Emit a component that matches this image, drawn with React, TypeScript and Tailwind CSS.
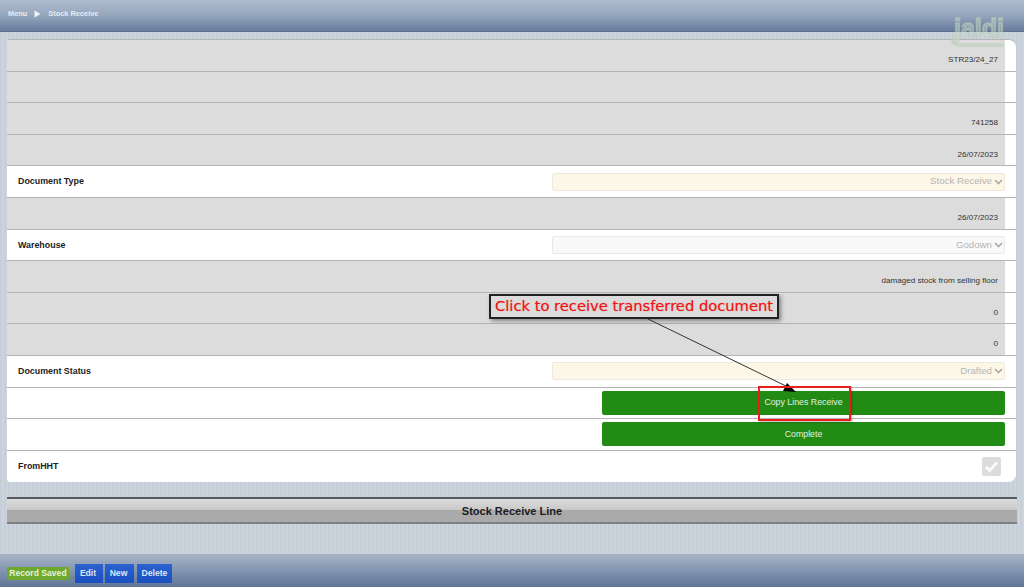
import React from "react";

const sans = "font-['Liberation_Sans',Arial,sans-serif]";

function GreyRow({ value }: { value?: string }) {
  return (
    <div className="flex h-[31.6px] border-b border-[#b4b4b4] bg-white">
      <div className="flex flex-1 items-end justify-end bg-[#dcdcdc] pr-[7px] pb-[5.5px] text-[8.1px] leading-[11px] text-[#333]">
        {value}
      </div>
      <div className="w-[11px]" />
    </div>
  );
}

function SelectRow({ label, value, bg, border }: { label: string; value: string; bg: string; border: string }) {
  return (
    <div className="flex h-[31.6px] items-center border-b border-[#b4b4b4] bg-white pl-[11px] pr-[11px]">
      <div className="flex-1 pt-[1px] text-[8.9px] font-bold text-[#222]">{label}</div>
      <div className={`flex h-[18px] w-[453px] items-center justify-end rounded-[2px] border pr-[1px] text-[9.7px] text-[#b5b5b5] ${bg} ${border}`}>
        <span>{value}</span>
        <svg width="9" height="6" viewBox="0 0 9 6" className="ml-[2px]">
          <path d="M1 1l3.5 3.5L8 1" fill="none" stroke="#a8a8a8" strokeWidth="1.6" />
        </svg>
      </div>
    </div>
  );
}

function ButtonRow({ label }: { label: string }) {
  return (
    <div className="flex h-[31.6px] items-center justify-end border-b border-[#b4b4b4] bg-white pr-[11px]">
      <div className="flex h-[24px] w-[403px] items-center justify-center rounded-[2px] bg-[#228b14] text-[8.8px] text-[#e3f0e0]">
        {label}
      </div>
    </div>
  );
}

export default function App() {
  return (
    <div className={`relative flex h-[587px] w-[1024px] flex-col overflow-hidden bg-[#c9d1db] bg-[repeating-linear-gradient(90deg,#c6ced8_0px,#c6ced8_2px,#ccd4dd_2px,#ccd4dd_4px)] ${sans}`}>
      <header className="flex h-[32px] shrink-0 items-center border-b border-[#5f6f88] bg-gradient-to-b from-[#b0bccd] via-[#95a6bd] to-[#667d9e] pl-[8px] pb-[4px] text-[7.4px] font-bold text-[#e6ebf2]">
        <span>Menu</span>
        <svg width="7" height="8" viewBox="0 0 7 8" className="ml-[7px]">
          <path d="M0.5 0.5L6.5 4L0.5 7.5Z" fill="#f2f4f7" />
        </svg>
        <span className="ml-[7px]">Stock Receive</span>
      </header>

      <main className="flex-1 px-[7px] pt-[7px]">
        <div className="w-[1009px] overflow-hidden rounded-tr-[8px] rounded-br-[8px] rounded-bl-[4px] rounded-tl-[3px] border-t border-[#b4b4b4] bg-white">
          <GreyRow value="STR23/24_27" />
          <GreyRow />
          <GreyRow value="741258" />
          <GreyRow value="26/07/2023" />
          <SelectRow label="Document Type" value="Stock Receive" bg="bg-[#fdf7e8]" border="border-[#eee9dc]" />
          <GreyRow value="26/07/2023" />
          <SelectRow label="Warehouse" value="Godown" bg="bg-[#f9f9f9]" border="border-[#e8e8e8]" />
          <GreyRow value="damaged stock from selling floor" />
          <GreyRow value="0" />
          <GreyRow value="0" />
          <SelectRow label="Document Status" value="Drafted" bg="bg-[#fdf7e8]" border="border-[#eee9dc]" />
          <ButtonRow label="Copy Lines Receive" />
          <ButtonRow label="Complete" />
          <div className="flex h-[31.6px] items-center justify-between bg-white pl-[11px] pr-[15px]">
            <span className="text-[8.9px] font-bold text-[#222]">FromHHT</span>
            <div className="flex h-[19px] w-[19px] items-center justify-center rounded-[2px] bg-[#dcdcdc]">
              <svg width="15" height="13" viewBox="0 0 15 13">
                <path d="M2 7l3.6 3.6L13 2.5" fill="none" stroke="#fafafa" strokeWidth="3" />
              </svg>
            </div>
          </div>
        </div>

        <div className="mt-[15px] flex h-[27px] w-[1010px] items-center justify-center border-t-2 border-b-2 border-t-[#555b60] border-b-[#7d8184] bg-[linear-gradient(180deg,#dcdcdc_0%,#c8c8c8_48%,#aaaaaa_50%,#aaaaaa_100%)] text-[11px] font-bold text-[#1c1c1c]">
          Stock Receive Line
        </div>
      </main>

      <footer className="flex h-[33px] shrink-0 items-center border-t border-[#a3b0c2] bg-gradient-to-b from-[#a6b3c7] to-[#5f7696] pl-[7px] pt-[4px] text-[8.6px] font-bold">
        <div className="flex h-[13px] w-[62px] items-center justify-center bg-[#6fa82e] text-[#e6f3d8]">Record Saved</div>
        <div className="ml-[6px] flex h-[19px] w-[28px] items-center justify-center bg-gradient-to-b from-[#2a62d0] to-[#1a4fc0] pr-[2px] text-[#dce6f8]">Edit</div>
        <div className="ml-[2px] flex h-[19px] w-[29px] items-center justify-center bg-gradient-to-b from-[#2a62d0] to-[#1a4fc0] pr-[2px] text-[#dce6f8]">New</div>
        <div className="ml-[3px] flex h-[19px] w-[35px] items-center justify-center bg-gradient-to-b from-[#2a62d0] to-[#1a4fc0] text-[#dce6f8]">Delete</div>
      </footer>

      {/* watermark */}
      <svg className="pointer-events-none absolute left-[948px] top-[14px]" width="60" height="36" viewBox="0 0 60 36">
        <path d="M5 25Q5 31 12 31L54 31" fill="none" stroke="#b9cdb8" strokeOpacity="0.55" strokeWidth="4" strokeLinecap="round" />
      </svg>
      <div className="absolute left-[954px] top-[14px] text-[25px] font-bold leading-[28px] text-[#d6e2d4]/40 [-webkit-text-stroke:1.6px_rgba(185,205,184,0.6)]">
        jaldi
      </div>

      {/* annotation */}
      <div className="absolute left-[489px] top-[294px] flex h-[25px] w-[290px] items-center justify-center border-2 border-[#222] bg-[#dcdcdc] font-['DejaVu_Sans',sans-serif] text-[14.7px] leading-none text-[#f01414] shadow-[2px_2px_4px_rgba(0,0,0,0.4)] [text-shadow:0_0_1px_rgba(240,20,20,0.5)]">
        Click to receive transferred document
      </div>
      <svg className="pointer-events-none absolute left-[640px] top-[315px]" width="165" height="80" viewBox="0 0 165 80">
        <path d="M7 3.5L150 73" stroke="#333" strokeWidth="1" fill="none" />
        <path d="M156 77L147 68L143 76Z" fill="#000" />
      </svg>
      <div className="pointer-events-none absolute left-[758px] top-[386px] h-[35px] w-[93px] border-2 border-[#e8201c] shadow-[1px_1px_2px_rgba(0,0,0,0.3)]" />
    </div>
  );
}
